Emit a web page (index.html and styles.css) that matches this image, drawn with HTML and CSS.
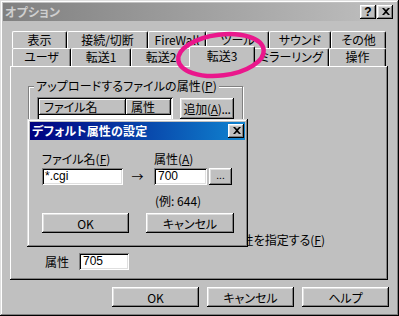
FILE: index.html
```html
<!DOCTYPE html>
<html lang="ja">
<head>
<meta charset="utf-8">
<title>オプション</title>
<link rel="stylesheet" href="styles.css">
</head>
<body>
<div class="window">
  <div class="titlebar inactive">
    <span class="title-text">オプション</span>
    <div class="title-btns">
      <span class="tbtn">?</span>
      <span class="tbtn x">
        <svg width="8" height="7" viewBox="0 0 8 7"><path d="M0 0h2l2 2 2-2h2L5 3.5 8 7H6L4 5 2 7H0l3-3.5z" fill="#000"/></svg>
      </span>
    </div>
  </div>
  <div class="client">
    <div class="tabrow row1">
      <div class="tab">表示</div>
      <div class="tab">接続/切断</div>
      <div class="tab">FireWall</div>
      <div class="tab">ツール</div>
      <div class="tab">サウンド</div>
      <div class="tab">その他</div>
    </div>
    <div class="tabrow row2">
      <div class="tab">ユーザ</div>
      <div class="tab">転送1</div>
      <div class="tab">転送2</div>
      <div class="tab selected">転送3</div>
      <div class="tab">ミラーリング</div>
      <div class="tab">操作</div>
    </div>
    <div class="panel">
      <div class="group">
        <div class="legend">アップロードするファイルの属性(<u>P</u>)</div>
        <div class="group-row">
          <div class="listbox">
            <div class="list-head">
              <span class="hcell name">ファイル名</span>
              <span class="hcell attr">属性</span>
            </div>
          </div>
          <div class="btn add">追加(<u>A</u>)...</div>
        </div>
      </div>
      <div class="check-row">
        <span class="checkbox"></span>
        <span>ファイル毎に属性を指定する(<u>F</u>)</span>
      </div>
      <div class="attr-row">
        <span>属性</span>
        <span class="field small">705</span>
      </div>
    </div>
    <div class="buttons">
      <div class="btn big">OK</div>
      <div class="btn big">キャンセル</div>
      <div class="btn big">ヘルプ</div>
    </div>
  </div>

  <div class="dialog">
    <div class="titlebar active">
      <span class="title-text">デフォルト属性の設定</span>
      <div class="title-btns">
        <span class="tbtn x">
          <svg width="8" height="7" viewBox="0 0 8 7"><path d="M0 0h2l2 2 2-2h2L5 3.5 8 7H6L4 5 2 7H0l3-3.5z" fill="#000"/></svg>
        </span>
      </div>
    </div>
    <div class="dlg-body">
      <div class="dlg-grid">
        <span class="lbl">ファイル名(<u>F</u>)</span>
        <span></span>
        <span class="lbl">属性(<u>A</u>)</span>
        <span></span>
        <span class="field name">*.cgi</span>
        <span class="arrow">→</span>
        <span class="field attr">700</span>
        <span class="btn dots">...</span>
        <span></span>
        <span></span>
        <span class="example">(例: 644)</span>
        <span></span>
      </div>
      <div class="dlg-buttons">
        <div class="btn ok">OK</div>
        <div class="btn cancel">キャンセル</div>
      </div>
    </div>
  </div>

  <svg class="marker" width="399" height="316" viewBox="0 0 399 316">
    <ellipse cx="221" cy="55" rx="43" ry="20.5" transform="rotate(-7 221 55)" fill="none" stroke="#ea178c" stroke-width="4.5"/>
  </svg>
</div>
</body>
</html>
```
FILE: styles.css
```css
* { box-sizing: border-box; }
html, body { margin: 0; padding: 0; }
body {
  width: 399px;
  height: 316px;
  overflow: hidden;
  font-family: "Noto Sans CJK JP", "Noto Sans", sans-serif;
  font-size: 12px;
  font-feature-settings: "palt";
  color: #000;
  background: #c0c0c0;
}
u { text-decoration: underline; text-underline-offset: 1px; }

.window {
  position: relative;
  width: 399px;
  height: 316px;
  padding: 3px;
  background: #c0c0c0;
  box-shadow: inset -1px -1px #000, inset 1px 1px #dfdfdf, inset -2px -2px #808080, inset 2px 2px #fff;
  display: flex;
  flex-direction: column;
}

.titlebar {
  height: 18px;
  display: flex;
  align-items: center;
  padding: 0 3px 0 2px;
  flex: none;
}
.titlebar.inactive { background: linear-gradient(90deg, #808080, #c0c0c0); }
.titlebar.active { background: linear-gradient(90deg, #000080, #1084d0); padding-right: 1px; }
.title-text {
  font-weight: bold;
  line-height: 18px;
  letter-spacing: 0.2px;
}
.inactive .title-text { color: #cfcfcf; }
.active .title-text { color: #fff; }
.title-btns { margin-left: auto; display: flex; gap: 1px; }
.tbtn {
  width: 16px;
  height: 14px;
  background: #c0c0c0;
  box-shadow: inset -1px -1px #000, inset 1px 1px #fff, inset -2px -2px #808080, inset 2px 2px #dfdfdf;
  display: flex;
  align-items: center;
  justify-content: center;
  font-family: "Liberation Sans", sans-serif;
  font-weight: bold;
  font-size: 12px;
  line-height: 14px;
  padding-bottom: 1px;
}
.tbtn.x { padding: 0 0 1px 1px; }

.client {
  flex: 1;
  padding: 10px 8px 0 7px;
  display: flex;
  flex-direction: column;
}

.tabrow {
  display: grid;
  margin-left: 2px;
  margin-right: 1px;
}
.row1 { grid-template-columns: 55px 81px 58px 63px 62px 55px; height: 17px; }
.row2 { grid-template-columns: 59px 60px 60px 62px 76px 57px; height: 18px; }
.tab {
  position: relative;
  background: #c0c0c0;
  border-top: 1px solid #fff;
  border-left: 1px solid #fff;
  border-right: 1px solid #000;
  border-radius: 2px 2px 0 0;
  box-shadow: inset -1px 0 #808080;
  text-align: center;
  line-height: 15px;
  white-space: nowrap;
}
.row2 .tab { line-height: 16px; }
.tab.selected {
  margin: -2px -2px -1px -2px;
  z-index: 2;
  line-height: 18px;
}

.panel {
  height: 214px;
  background: #c0c0c0;
  box-shadow: inset -1px -1px #000, inset 1px 1px #fff, inset -2px -2px #808080;
  padding: 20px 0 0 18px;
  display: flex;
  flex-direction: column;
}

.group {
  width: 215px;
  height: 140px;
  border: 1px solid #808080;
  box-shadow: 1px 1px 0 #fff, inset 1px 1px 0 #fff;
  flex: none;
}
.legend {
  width: fit-content;
  margin: -8px 0 0 5px;
  padding: 0 2px;
  background: #c0c0c0;
  line-height: 14px;
  letter-spacing: 0.1px;
}
.group-row {
  display: flex;
  gap: 7px;
  margin: 4px 0 0 8px;
}
.listbox {
  width: 136px;
  height: 120px;
  background: #fff;
  padding: 2px;
  box-shadow: inset 1px 1px #808080, inset -1px -1px #fff, inset 2px 2px #000, inset -2px -2px #dfdfdf;
}
.list-head { display: flex; height: 16px; }
.hcell {
  background: #c0c0c0;
  box-shadow: inset -1px -1px #000, inset 1px 1px #fff, inset -2px -2px #808080;
  line-height: 16px;
  padding-left: 5px;
}
.hcell.name { width: 87px; }
.hcell.attr { width: 45px; }

.btn {
  background: #c0c0c0;
  box-shadow: inset -1px -1px #000, inset 1px 1px #fff, inset -2px -2px #808080, inset 2px 2px #dfdfdf;
  display: flex;
  align-items: center;
  justify-content: center;
  white-space: nowrap;
}
.btn.add {
  width: 54px;
  height: 21px;
  margin-top: 1px;
  letter-spacing: -0.3px;
}

.check-row {
  display: flex;
  align-items: center;
  justify-content: flex-end;
  gap: 4px;
  width: 297px;
  margin: 7px 0 0 0;
  height: 14px;
  line-height: 14px;
  white-space: nowrap;
}
.checkbox {
  width: 13px;
  height: 13px;
  flex: none;
  background: #fff;
  box-shadow: inset 1px 1px #808080, inset -1px -1px #fff, inset 2px 2px #000, inset -2px -2px #dfdfdf;
}

.attr-row {
  display: flex;
  align-items: center;
  gap: 10px;
  margin: 6px 0 0 17px;
}
.field {
  background: #fff;
  box-shadow: inset 1px 1px #808080, inset -1px -1px #fff, inset 2px 2px #000, inset -2px -2px #dfdfdf;
  height: 17px;
  line-height: 17px;
  padding-left: 4px;
  font-family: "Liberation Sans", "Noto Sans CJK JP", sans-serif;
}
.field.small { width: 50px; }

.buttons {
  display: flex;
  justify-content: flex-end;
  gap: 8px;
  margin: 7px -1px 0 0;
}
.btn.big { width: 87px; height: 20px; }

.dialog {
  position: absolute;
  left: 27px;
  top: 119px;
  width: 221px;
  height: 128px;
  background: #c0c0c0;
  padding: 3px;
  box-shadow: inset -1px -1px #000, inset 1px 1px #dfdfdf, inset -2px -2px #808080, inset 2px 2px #fff;
  z-index: 5;
}
.dlg-body { padding: 11px 0 0 12px; }
.dlg-grid {
  display: grid;
  grid-template-columns: 81px 31px 53px 25px;
  grid-template-rows: 17px 17px 24px;
  align-items: center;
}
.lbl { line-height: 16px; align-self: start; }
.arrow { text-align: center; font-size: 12px; padding-right: 2px; }
.field.name { width: 81px; padding-left: 3px; }
.field.attr { width: 53px; }
.btn.dots {
  width: 23px;
  height: 17px;
  margin-left: 2px;
  font-size: 10px;
  line-height: 10px;
  padding-bottom: 3px;
}
.example { white-space: nowrap; padding-left: 1px; padding-top: 6px; }
.dlg-buttons {
  display: flex;
  gap: 17px;
  margin-top: 4px;
}
.btn.ok { width: 87px; height: 20px; }
.btn.cancel { width: 88px; height: 20px; }

.marker {
  position: absolute;
  left: 0;
  top: 0;
  z-index: 10;
  pointer-events: none;
}
```
